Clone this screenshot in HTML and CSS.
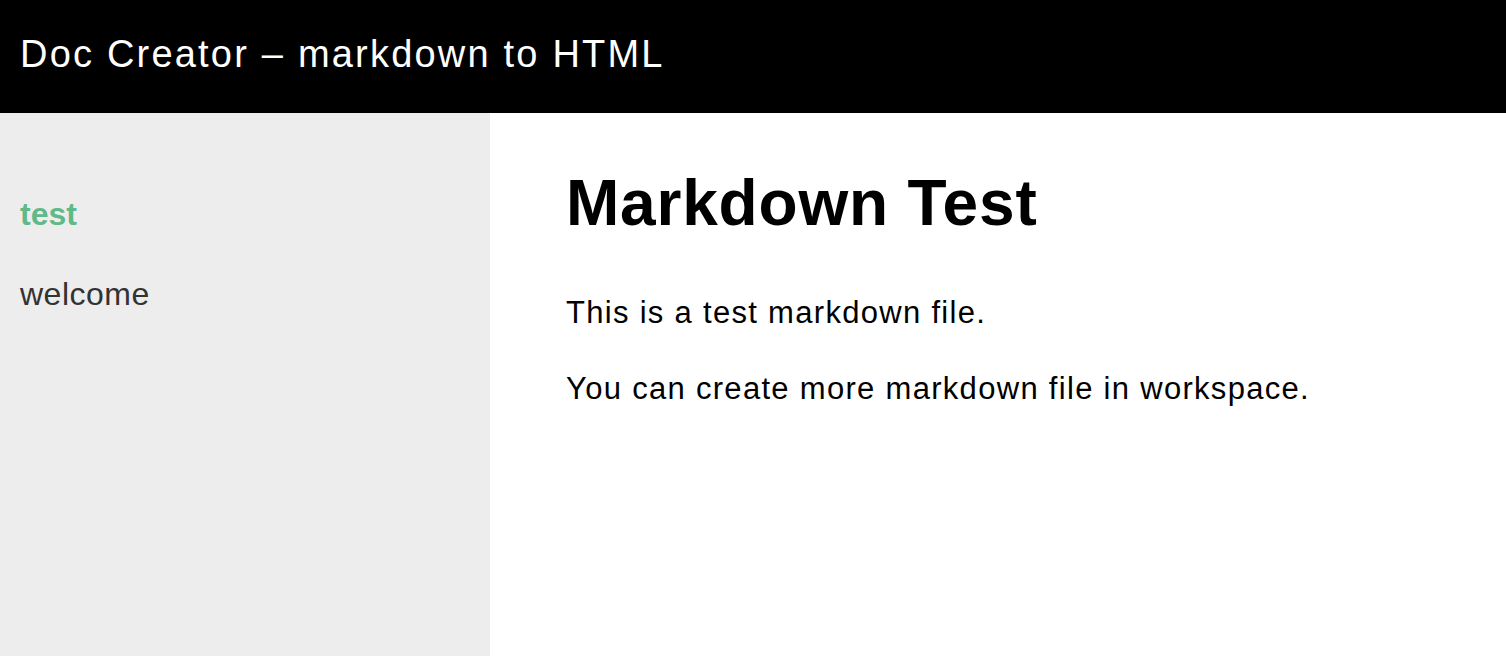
FILE: index.html
```html
<!DOCTYPE html>
<html lang="en">
<head>
<meta charset="utf-8">
<title>Doc Creator</title>
<link rel="stylesheet" href="styles.css">
</head>
<body>
<header class="topbar">
  <h2 class="title">Doc Creator – markdown to HTML</h2>
</header>
<div class="layout">
  <nav class="sidebar">
    <a class="nav-link active" href="#">test</a>
    <a class="nav-link" href="#">welcome</a>
  </nav>
  <main class="content">
    <h1 class="doc-title">Markdown Test</h1>
    <p class="doc-text">This is a test markdown file.</p>
    <p class="doc-text">You can create more markdown file in workspace.</p>
  </main>
</div>
</body>
</html>
```
FILE: styles.css
```css
* { box-sizing: border-box; }
html, body {
  margin: 0;
  padding: 0;
  height: 100%;
  font-family: "Liberation Sans", Arial, sans-serif;
}
body {
  display: flex;
  flex-direction: column;
  overflow: hidden;
}
.topbar {
  background: #000;
  color: #fff;
  height: 113px;
  padding: 0 20px;
  flex: none;
}
.title {
  margin: 0;
  padding-top: 32px;
  font-size: 38px;
  letter-spacing: 2.2px;
  font-weight: normal;
  line-height: 44px;
}
.layout {
  flex: 1;
  display: flex;
}
.sidebar {
  width: 490px;
  flex: none;
  background: #ededed;
  padding: 79px 20px 0;
  display: flex;
  flex-direction: column;
  gap: 36px;
}
.nav-link {
  font-size: 32px;
  letter-spacing: 0.5px;
  line-height: 44px;
  color: #333;
  text-decoration: none;
}
.nav-link.active {
  color: #5fba8a;
  font-weight: bold;
  letter-spacing: 0;
}
.content {
  flex: 1;
  padding: 52px 76px 0;
  background: #fff;
}
.doc-title {
  margin: 0 0 48px;
  font-size: 64px;
  letter-spacing: 0.8px;
  line-height: 76px;
  font-weight: bold;
  color: #000;
}
.doc-text {
  margin: 0 0 28px;
  font-size: 31px;
  letter-spacing: 1.3px;
  line-height: 48px;
  color: #000;
}
```
